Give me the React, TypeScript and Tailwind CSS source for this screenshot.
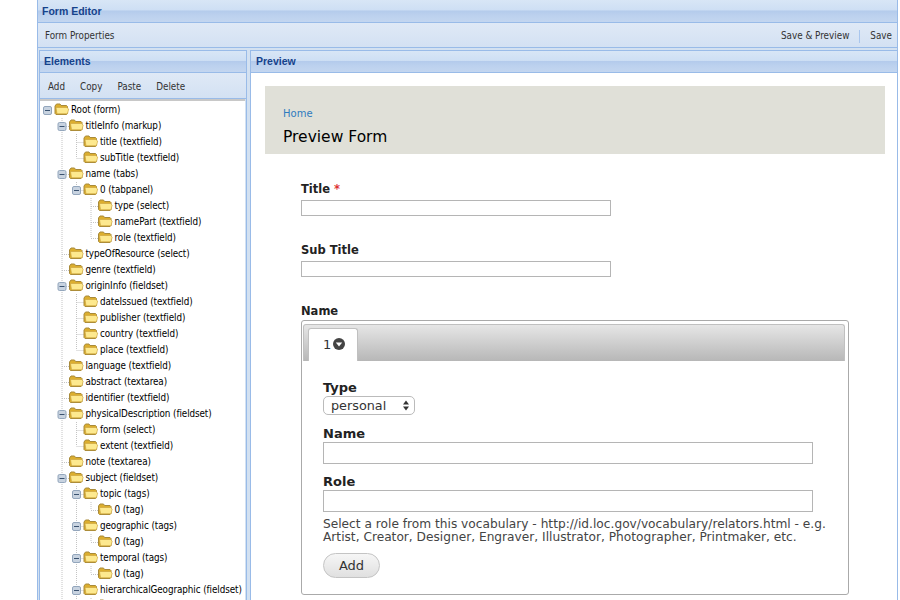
const rows: [number, string, boolean][] = [
  [0, "Root (form)", true],
  [1, "titleInfo (markup)", true],
  [2, "title (textfield)", false],
  [2, "subTitle (textfield)", false],
  [1, "name (tabs)", true],
  [2, "0 (tabpanel)", true],
  [3, "type (select)", false],
  [3, "namePart (textfield)", false],
  [3, "role (textfield)", false],
  [1, "typeOfResource (select)", false],
  [1, "genre (textfield)", false],
  [1, "originInfo (fieldset)", true],
  [2, "dateIssued (textfield)", false],
  [2, "publisher (textfield)", false],
  [2, "country (textfield)", false],
  [2, "place (textfield)", false],
  [1, "language (textfield)", false],
  [1, "abstract (textarea)", false],
  [1, "identifier (textfield)", false],
  [1, "physicalDescription (fieldset)", true],
  [2, "form (select)", false],
  [2, "extent (textfield)", false],
  [1, "note (textarea)", false],
  [1, "subject (fieldset)", true],
  [2, "topic (tags)", true],
  [3, "0 (tag)", false],
  [2, "geographic (tags)", true],
  [3, "0 (tag)", false],
  [2, "temporal (tags)", true],
  [3, "0 (tag)", false],
  [2, "hierarchicalGeographic (fieldset)", true],
  [3, "", false],
];

const cx = (d: number) => 6.5 + 14.5 * d;

function hasNextSibling(i: number, d: number) {
  for (let j = i + 1; j < rows.length; j++) {
    if (rows[j][0] < d) return false;
    if (rows[j][0] === d) return true;
  }
  return d > 0;
}

function TreeGlyphs({ i }: { i: number }) {
  const [d, , open] = rows[i];
  const w = 30 + 14.5 * d;
  const x = cx(d);
  const fx = x + 7;
  const guides = [];
  for (let a = 1; a < d; a++) {
    if (hasNextSibling(i, a)) guides.push(cx(a));
  }
  return (
    <svg width={w} height={16} className="shrink-0">
      {guides.map((g) => (
        <line key={g} x1={g} x2={g} y1={0} y2={16} stroke="#c4c4c4" strokeDasharray="1 1" />
      ))}
      {d > 0 && (
        <>
          <line x1={x} x2={x} y1={0} y2={hasNextSibling(i, d) ? 16 : 8} stroke="#c4c4c4" strokeDasharray="1 1" />
          <line x1={x} x2={fx} y1={8.5} y2={8.5} stroke="#c4c4c4" strokeDasharray="1 1" />
        </>
      )}
      {open && (
        <>
          <rect x={x - 4} y={4.5} width={8} height={8} rx={1.5} fill="#c8d3e0" stroke="#93a6bc" />
          <rect x={x - 2.5} y={8} width={5} height={1} fill="#3a5270" />
        </>
      )}
      <g transform={`translate(${fx} 1)`}>
        <path d="M0.5 3 L2 1 H5.5 L6.5 2.5 H12 L13 3.5 V10.5 L12 11.5 H1.5 L0.5 10.5 Z" fill="#dcae2e" stroke="#a88a3a" />
        <path d="M1.5 4.5 H12.5 L14.2 6 L13 10.8 H2.5 Z" fill="#fde98f" stroke="#c79f3a" strokeWidth="0.6" />
      </g>
    </svg>
  );
}

const headerBg =
  "bg-[linear-gradient(#d8e6f6_0%,#cedff4_45%,#b4cbec_50%,#bcd1ee_70%,#c3d6f0_100%)]";
const toolbarBg = "bg-[linear-gradient(#dfe9f6,#d3e1f3)]";
const ext = "font-['DejaVu_Sans_Condensed','Noto_Sans',sans-serif]";
const form = "font-['DejaVu_Sans','Liberation_Sans',sans-serif]";
const title = "font-['Liberation_Sans',sans-serif] font-bold text-[10.5px] text-[#15428b]";

function Input({ className }: { className: string }) {
  return <div className={`border border-[#b5b5b5] bg-white ${className}`} />;
}

export default function App() {
  return (
    <div className="h-[600px] w-[900px] overflow-hidden bg-white pl-[37px] pr-[2px]">
      <div className={`flex h-full flex-col border-x border-[#99bbe8] bg-[#d3e1f1] ${ext}`}>
        <div className={`flex h-[23px] shrink-0 items-center border-b border-[#99bbe8] pl-[4px] pt-[1px] ${headerBg} ${title}`}>
          Form Editor
        </div>
        <div className={`flex h-[25px] shrink-0 items-center justify-between border-b border-[#99bbe8] pl-[7px] pr-[5px] pt-[3px] text-[9.8px] text-[#333] ${toolbarBg}`}>
          <span>Form Properties</span>
          <div className="flex items-center">
            <span>Save &amp; Preview</span>
            <span className="mx-[10px] h-[13px] w-px bg-[#a9c6ee]" />
            <span>Save</span>
          </div>
        </div>
        <div className="flex min-h-0 flex-1 gap-[3px] pl-[1px] pt-[2px]">
          <div className="flex w-[208px] shrink-0 flex-col border-x border-t border-[#99bbe8]">
            <div className={`flex h-[22px] shrink-0 items-center border-b border-[#99bbe8] pl-[4px] ${headerBg} ${title}`}>
              Elements
            </div>
            <div className={`flex h-[26px] shrink-0 items-center gap-[15px] border-b border-[#99bbe8] pl-[8px] pt-[3px] text-[9.8px] text-[#333] ${toolbarBg}`}>
              <span>Add</span>
              <span>Copy</span>
              <span>Paste</span>
              <span>Delete</span>
            </div>
            <div className="mr-[1px] flex-1 overflow-hidden border-t-2 border-[#c8c8c8] bg-white pl-[1px] pt-[1px]">
              {rows.map(([, label], i) => (
                <div key={i} className="flex h-4 items-center whitespace-nowrap text-[9.8px] tracking-[-0.08px] text-black">
                  <TreeGlyphs i={i} />
                  {label && <span>{label}</span>}
                </div>
              ))}
            </div>
          </div>
          <div className="flex min-w-0 flex-1 flex-col border-l border-t border-[#99bbe8]">
            <div className={`flex h-[22px] shrink-0 items-center border-b border-[#99bbe8] pl-[5px] ${headerBg} ${title}`}>
              Preview
            </div>
            <div className={`flex-1 overflow-hidden bg-white pl-[14px] pr-[12px] pt-[13px] ${form}`}>
              <div className="h-[68px] bg-[#e0e0d8] pl-[18px] pt-[20px]">
                <div className="text-[10px] leading-[15px] text-[#2f7bbf]">Home</div>
                <div className="mt-[6px] text-[15.5px] leading-[20px] text-black">Preview Form</div>
              </div>
              <div className="pl-[36px] pt-[28px] text-[11.5px] text-[#222]">
                <div className="font-bold leading-[15px]">
                  Title <span className="text-[#d33]">*</span>
                </div>
                <Input className="mt-[3px] h-[16px] w-[310px]" />
                <div className="mt-[27px] font-bold leading-[15px]">Sub Title</div>
                <Input className="mt-[3px] h-[16px] w-[310px]" />
                <div className="mt-[27px] font-bold leading-[15px]">Name</div>
                <div className="mt-[1px] h-[275px] w-[548px] rounded-[3px] border border-[#aaa] pl-[1px] pr-[3px] pt-[3px]">
                  <div className="flex h-[37px] items-end rounded-t-[3px] border border-b-0 border-[#c0c0c0] bg-[linear-gradient(#e6e6e6,#b7b7b7)] pl-[4px]">
                    <div className="flex h-[33px] w-[50px] items-center gap-[2px] rounded-t-[3px] border border-b-0 border-[#c0c0c0] bg-white pl-[14px] text-[13px] text-[#333]">
                      <span>1</span>
                      <svg width="12" height="12" viewBox="0 0 12 12" className="-mt-[2px]">
                        <circle cx="6" cy="6" r="6" fill="#444" />
                        <path d="M2.8 4.6 H9.2 L6 8.4 Z" fill="#fff" />
                      </svg>
                    </div>
                  </div>
                  <div className="pl-[20px] pt-[18px]">
                    <div className="text-[13px] font-bold leading-[17px]">Type</div>
                    <div className="flex h-[19px] w-[92px] items-center justify-between rounded-[5px] border border-[#bbb] pl-[7px] pr-[4px] text-[12.8px] text-[#333]">
                      <span>personal</span>
                      <svg width="8" height="11" viewBox="0 0 8 11">
                        <path d="M4 0.5 L7 4.5 H1 Z M1 6.5 H7 L4 10.5 Z" fill="#333" />
                      </svg>
                    </div>
                    <div className="mt-[10px] text-[13px] font-bold leading-[17px]">Name</div>
                    <Input className="h-[22px] w-[490px]" />
                    <div className="mt-[9px] text-[13px] font-bold leading-[17px]">Role</div>
                    <Input className="h-[22px] w-[490px]" />
                    <div className="mt-[6px] w-[520px] whitespace-nowrap text-[12.2px] leading-[13px] text-[#444]">
                      <div>Select a role from this vocabulary - http://id.loc.gov/vocabulary/relators.html - e.g.</div>
                      <div>Artist, Creator, Designer, Engraver, Illustrator, Photographer, Printmaker, etc.</div>
                    </div>
                    <div className="mt-[9px] flex h-[25px] w-[57px] items-center justify-center rounded-full border border-[#c4c4c4] bg-[linear-gradient(#f6f6f6,#e0e0e0)] text-[13px] text-[#333]">
                      Add
                    </div>
                  </div>
                </div>
              </div>
            </div>
          </div>
        </div>
      </div>
    </div>
  );
}
